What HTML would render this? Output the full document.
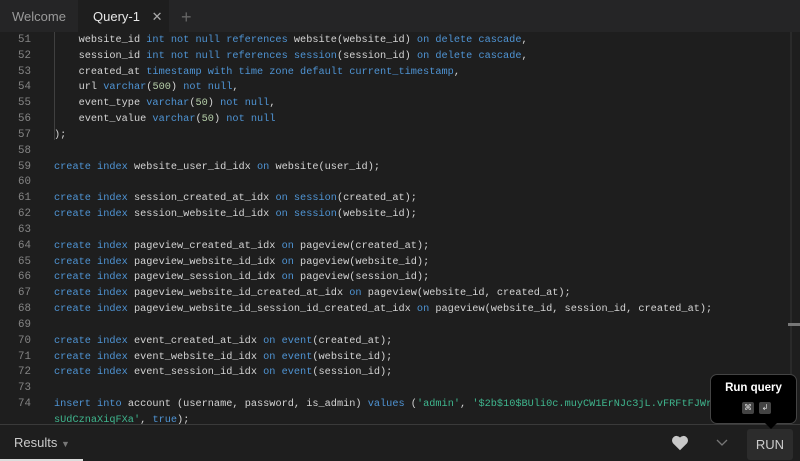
<!DOCTYPE html>
<html><head><meta charset="utf-8"><style>
*{margin:0;padding:0;box-sizing:border-box}
body{width:800px;height:461px;background:#1e1e1e;overflow:hidden;position:relative;font-family:"Liberation Sans",sans-serif}
.tabs{position:absolute;left:0;top:0;width:800px;height:34px;background:#252526;}
.tab{position:absolute;top:0;height:34px;line-height:34px;font-size:13px;color:#9a9a9a}
.editor{position:absolute;left:0;top:32px;width:800px;height:392px;overflow:hidden;background:#1e1e1e}
.ln{position:absolute;left:0;width:31px;text-align:right;color:#858585;font-size:10.8px!important}
.code{position:absolute;left:54px;white-space:pre;color:#d4d4d4}
.row{position:absolute;height:16px;font-family:"Liberation Mono",monospace;font-size:10.25px;line-height:16px}
.k{color:#4f94d4}.n{color:#b5cea8}.s{color:#3fb68e}
.bottom{position:absolute;left:0;top:424px;width:800px;height:37px;background:#1e1e1e;border-top:1px solid #3a3a3a}
</style></head><body>
<div class="tabs">
<div class="tab" style="left:0;width:78px;text-align:center">Welcome</div>
<div class="tab" style="left:78px;width:91px;background:#1e1e1e;color:#e8e8e8;padding-left:15px">Query-1 <span style="color:#aaa;margin-left:8px;font-size:13px;font-weight:100">✕</span></div>
<div class="tab" style="left:181px;color:#666;font-size:18px">+</div>
</div>
<div class="editor">
<div style="position:absolute;left:54px;top:0;width:1px;height:108px;background:#404040"></div>
<div style="position:absolute;left:790px;top:0;width:2px;height:392px;background:#2a2a2a"></div>
<div style="position:absolute;left:788px;top:291px;width:12px;height:3px;background:#777"></div>
<div id="c"></div>
</div>
<div class="bottom">
<div style="position:absolute;left:14px;top:10px;font-size:13px;color:#ccc">Results <span style="color:#777;font-size:9px">▼</span></div>
<svg style="position:absolute;left:671px;top:10px" width="18" height="16" viewBox="0 0 24 22"><path d="M12 21 L2.5 11.5 A5.5 5.5 0 0 1 12 3.5 A5.5 5.5 0 0 1 21.5 11.5 Z" fill="#c8c8c8"/></svg>
<svg style="position:absolute;left:716px;top:14px" width="12" height="8" viewBox="0 0 12 8"><path d="M1 1 L6 6 L11 1" stroke="#777" stroke-width="1.3" fill="none"/></svg>
<div style="position:absolute;left:747px;top:4px;width:46px;height:31px;background:#2c2c2c;border-radius:3px;color:#ccc;font-size:13px;text-align:center;line-height:31px">RUN</div>
<div style="position:absolute;left:0;top:34px;width:83px;height:2px;background:#ddd"></div>
</div>
<div style="position:absolute;left:710px;top:374px;width:87px;height:50px;background:#000;border:1px solid #444;border-radius:7px">
<div style="color:#fff;font-size:11.5px;font-weight:bold;text-align:center;margin-top:7px">Run query</div>
<div style="position:absolute;left:31px;top:27px;width:12px;height:12px;background:#444;border-radius:2px;color:#ddd;font-size:8px;text-align:center;line-height:12px">⌘</div>
<div style="position:absolute;left:48px;top:27px;width:12px;height:12px;background:#444;border-radius:2px;color:#ddd;font-size:8px;text-align:center;line-height:12px">↲</div>
</div>
<div style="position:absolute;left:765px;top:423px;width:0;height:0;border-left:6px solid transparent;border-right:6px solid transparent;border-top:6px solid #000"></div>
<script>
const L=[
[51,'    website_id <k>int not null references</k> website(website_id) <k>on delete cascade</k>,'],
[52,'    session_id <k>int not null references</k> <k>session</k>(session_id) <k>on delete cascade</k>,'],
[53,'    created_at <k>timestamp with time zone default current_timestamp</k>,'],
[54,'    url <k>varchar</k>(<n>500</n>) <k>not null</k>,'],
[55,'    event_type <k>varchar</k>(<n>50</n>) <k>not null</k>,'],
[56,'    event_value <k>varchar</k>(<n>50</n>) <k>not null</k>'],
[57,');'],[58,''],
[59,'<k>create index</k> website_user_id_idx <k>on</k> website(user_id);'],[60,''],
[61,'<k>create index</k> session_created_at_idx <k>on</k> <k>session</k>(created_at);'],
[62,'<k>create index</k> session_website_id_idx <k>on</k> <k>session</k>(website_id);'],[63,''],
[64,'<k>create index</k> pageview_created_at_idx <k>on</k> pageview(created_at);'],
[65,'<k>create index</k> pageview_website_id_idx <k>on</k> pageview(website_id);'],
[66,'<k>create index</k> pageview_session_id_idx <k>on</k> pageview(session_id);'],
[67,'<k>create index</k> pageview_website_id_created_at_idx <k>on</k> pageview(website_id, created_at);'],
[68,'<k>create index</k> pageview_website_id_session_id_created_at_idx <k>on</k> pageview(website_id, session_id, created_at);'],[69,''],
[70,'<k>create index</k> event_created_at_idx <k>on</k> <k>event</k>(created_at);'],
[71,'<k>create index</k> event_website_id_idx <k>on</k> <k>event</k>(website_id);'],
[72,'<k>create index</k> event_session_id_idx <k>on</k> <k>event</k>(session_id);'],[73,''],
[74,'<k>insert into</k> account (username, password, is_admin) <k>values</k> (<s>\'admin\'</s>, <s>\'$2b$10$BUli0c.muyCW1ErNJc3jL.vFRFtFJWr</s>'],
];
let h='';L.forEach((l,i)=>{const y=i*15.83;let t=l[1].replace(/<k>/g,'<span class="k">').replace(/<n>/g,'<span class="n">').replace(/<s>/g,'<span class="s">').replace(/<\/[kns]>/g,'</span>');
h+=`<div class="row ln" style="top:${y}px">${l[0]}</div><div class="row code" style="top:${y}px">${t}</div>`;});
h+=`<div class="row code" style="top:${24*15.83}px"><span class="s">sUdCznaXiqFXa'</span>, <span class="k">true</span>);</div>`;
document.getElementById('c').innerHTML=h;
</script>
</body></html>
